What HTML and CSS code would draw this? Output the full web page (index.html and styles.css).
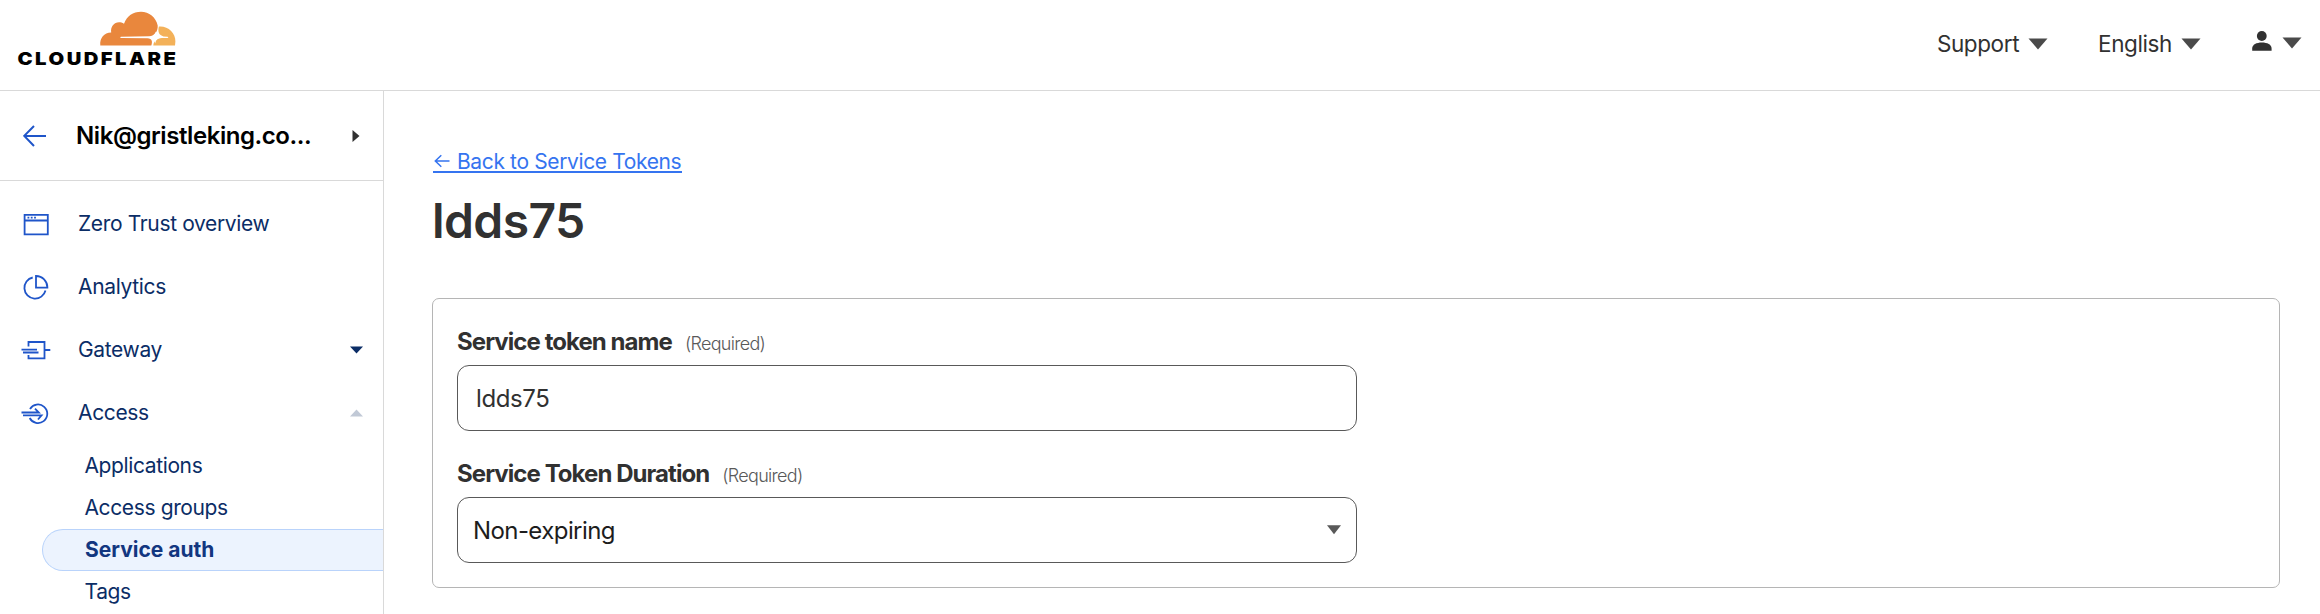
FILE: index.html
```html
<!DOCTYPE html>
<html lang="en">
<head>
<meta charset="utf-8">
<title>Service auth</title>
<link rel="stylesheet" href="styles.css">
</head>
<body>
<header class="topbar">
  <svg class="logo" width="164" height="64" viewBox="14 6 164 64" role="img" aria-label="Cloudflare">
    <path fill="#e9873d" d="M100.3 45.6C99.6 38 104 32.9 111.2 32.6C110 25 117 19.5 124 23.8C127 16 133 11.800 141 11.800C149 11.800 156 17.500 157.700 25.500C158 31 155 35.800 149 36.300L121 36.700C120 36.900 120 37.900 121 38L147.500 38.200C152 38.400 152.800 41.500 151.300 45.600Z"/>
    <path fill="#f3b159" d="M158.900 26.600C168 25.800 175.700 33 175.400 41.500L175 45.600H153.300C153.800 41 157 38.200 162 38.100L167.500 37.900C168.500 37.700 168.500 36.900 167.500 36.700L163.500 36.400C159 35.600 157.500 31.500 158.900 26.600Z"/>
    <path fill="#fff" d="M155.500 31.500C156.500 35.500 158 37 162 37.500C158 38 156 39.800 155.200 43.500C154.500 39.800 153 38.200 149.500 37.500C153 36.800 154.800 35.200 155.500 31.500Z"/>
    <text class="wordmark" x="17.500" y="64.600" textLength="161" lengthAdjust="spacingAndGlyphs">CLOUDFLARE</text>
  </svg>
  <nav class="topnav">
    <a class="menu">Support <svg width="20" height="12" viewBox="0 0 20 12"><path fill="#4a4a4a" d="M.5.500h19L10 11.500z"/></svg></a>
    <a class="menu">English <svg width="20" height="12" viewBox="0 0 20 12"><path fill="#4a4a4a" d="M.5.500h19L10 11.500z"/></svg></a>
    <a class="menu user">
      <svg width="20" height="20" viewBox="0 0 20 20" fill="#313131"><circle cx="9.800" cy="5" r="4.900"/><path d="M.2 19.800V17.500C.2 13.700 4.500 11.600 9.900 11.600s9.700 2.100 9.700 5.900v2.300z"/></svg>
      <svg class="user-caret" width="20" height="12" viewBox="0 0 20 12"><path fill="#4a4a4a" d="M.5.500h19L10 11.500z"/></svg>
    </a>
  </nav>
</header>
<div class="layout">
  <aside class="sidebar">
    <div class="account">
      <svg width="24" height="22" viewBox="0 0 24 22" fill="none" stroke="#1f55c9" stroke-width="2"><path d="M23 10.900H1.500M11 1L1.300 10.900L11 21"/></svg>
      <span class="account-name">Nik@gristleking.co...</span>
      <svg class="end" width="8" height="12" viewBox="0 0 8 12"><path fill="#313131" d="M.5 0L7.500 6L.5 12z"/></svg>
    </div>
    <ul class="nav">
      <li><svg width="30" height="30" viewBox="0 0 30 30"><path d="M3.600 5.900h23.200v19.400H3.600zM3.600 11.500h23.200" /><path d="M6.500 8.700h1.800M9.800 8.700h1.800M13.100 8.700h1.800"/></svg><span>Zero Trust overview</span></li>
      <li><svg width="30" height="30" viewBox="0 0 30 30"><path d="M15 4v11.600h11.400A11.500 11.500 0 0 0 15 4z"/><path d="M11.700 5.500A10.700 10.700 0 1 0 24.500 18.500"/></svg><span>Analytics</span></li>
      <li><svg width="30" height="30" viewBox="0 0 30 30"><path d="M7.500 11.500V7h16v16.400H7.500V20M23.500 15h5.800M.5 14.600h15.500M2 17.500h15.500"/></svg><span>Gateway</span><svg class="end" width="13" height="8" viewBox="0 0 13 8"><path class="fill-navy" d="M0 .5h13L6.500 7.500z"/></svg></li>
      <li><svg width="30" height="30" viewBox="0 0 30 30"><path d="M9 11A9.300 9.300 0 1 1 8.700 20M.5 14.500h17.300L14 10.700M2 17.400h18.500L17 21.500"/></svg><span>Access</span><svg class="end" width="13" height="8" viewBox="0 0 13 8"><path class="fill-mute" d="M0 7.500h13L6.500 .5z"/></svg></li>
    </ul>
    <ul class="subnav">
      <li>Applications</li>
      <li>Access groups</li>
      <li class="active">Service auth</li>
      <li>Tags</li>
    </ul>
  </aside>
  <main class="content">
    <a class="back"><svg width="24" height="14" viewBox="0 0 24 14" fill="none" stroke="#3574f0" stroke-width="1.500"><path d="M16.500 7H2.500M8.300 1.200L2.300 7l6 5.800"/></svg><span>Back to Service Tokens</span></a>
    <h1>ldds75</h1>
    <section class="card">
      <div class="label name-label"><b>Service token name</b><small>(Required)</small></div>
      <div class="field name-field">ldds75</div>
      <div class="label duration-label"><b>Service Token Duration</b><small>(Required)</small></div>
      <div class="field select">Non-expiring<svg class="end" width="14" height="10" viewBox="0 0 14 10"><path fill="#595959" d="M0 .300h14L7 9.300z"/></svg></div>
    </section>
  </main>
</div>
</body>
</html>
```
FILE: styles.css
```css
* { box-sizing: border-box; }
body { margin: 0; height: 614px; overflow: hidden; background: #fff; color: #313131; font-family: Inter, "Liberation Sans", sans-serif; }
svg { display: block; flex: none; }
ul { list-style: none; margin: 0; padding: 0; }
.topbar { display: flex; justify-content: space-between; align-items: flex-start; height: 91px; padding: 6px 18px 0 14px; border-bottom: 1px solid #d9d9d9; }
.wordmark { font-size: 18px; font-weight: 900; letter-spacing: 2.2px; fill: #000; }
.topnav { display: flex; gap: 50px; height: 76px; align-items: center; }
.menu { display: flex; align-items: center; gap: 9px; font-size: 22.5px; line-height: 28px; letter-spacing: -0.4px; }
.user { margin: -7px 0 0 1px; gap: 10px; }
.user-caret { margin-top: 4px; }
.layout { display: flex; height: 523px; }
.sidebar { width: 384px; flex: none; border-right: 1px solid #d9d9d9; color: #0b2d66; }
.account { display: flex; align-items: center; height: 90px; padding: 0 23px 0 23px; border-bottom: 1px solid #d9d9d9; color: #000; }
.account-name { margin-left: 29px; font-size: 24px; font-weight: 600; letter-spacing: -0.43px; white-space: nowrap; }
.end { margin-left: auto; }
.nav { padding-top: 11px; font-size: 21px; letter-spacing: -0.35px; }
.nav li { display: flex; align-items: center; height: 63px; padding: 0 20px 0 21px; }
.nav span { margin-left: 27px; }
.nav svg { fill: none; stroke: #1f55c9; stroke-width: 1.8; }
.nav .end { stroke: none; }
.nav .fill-navy { fill: #0b2d66; }
.nav .fill-mute { fill: #c1c9d6; }
.subnav { font-size: 21px; line-height: 42px; padding-top: 1px; letter-spacing: -0.38px; }
.subnav li { height: 42px; padding-left: 84.5px; }
.subnav .active { margin-left: 42px; padding-left: 42px; line-height: 40px; border: 1px solid #b9d3fb; border-right: 0; border-radius: 21px 0 0 21px; background: #ecf3fe; color: #123680; font-weight: 700; letter-spacing: 0; }
.content { flex: 1; padding: 58px 40px 0 48px; }
.back { display: flex; align-items: flex-end; width: 249px; height: 24px; margin-left: 1px; border-bottom: 2px solid #3574f0; color: #3574f0; font-size: 21px; line-height: 18px; letter-spacing: -0.37px; white-space: nowrap; }
.back svg { margin-bottom: 3px; }
h1 { margin: 18px 0 0; font-size: 48px; line-height: 60px; font-weight: 600; letter-spacing: -0.6px; }
.card { margin-top: 47px; height: 290px; padding: 26px 24px 0; border: 1px solid #b5b5b5; border-radius: 7px; }
.label { display: flex; align-items: baseline; gap: 13px; height: 40px; line-height: 34px; }
.label b { font-size: 24px; font-weight: 700; letter-spacing: -0.94px; }
.label small { font-size: 18px; font-weight: 300; letter-spacing: -0.7px; color: #595959; }
.field { display: flex; align-items: center; width: 900px; height: 66px; border: 1px solid #595959; border-radius: 12px; padding: 0 15px 0 18px; font-size: 24px; letter-spacing: -0.4px; }
.duration-label { margin-top: 26px; }
.select { padding-left: 15px; color: #1d1d1d; letter-spacing: -0.58px; }
```
